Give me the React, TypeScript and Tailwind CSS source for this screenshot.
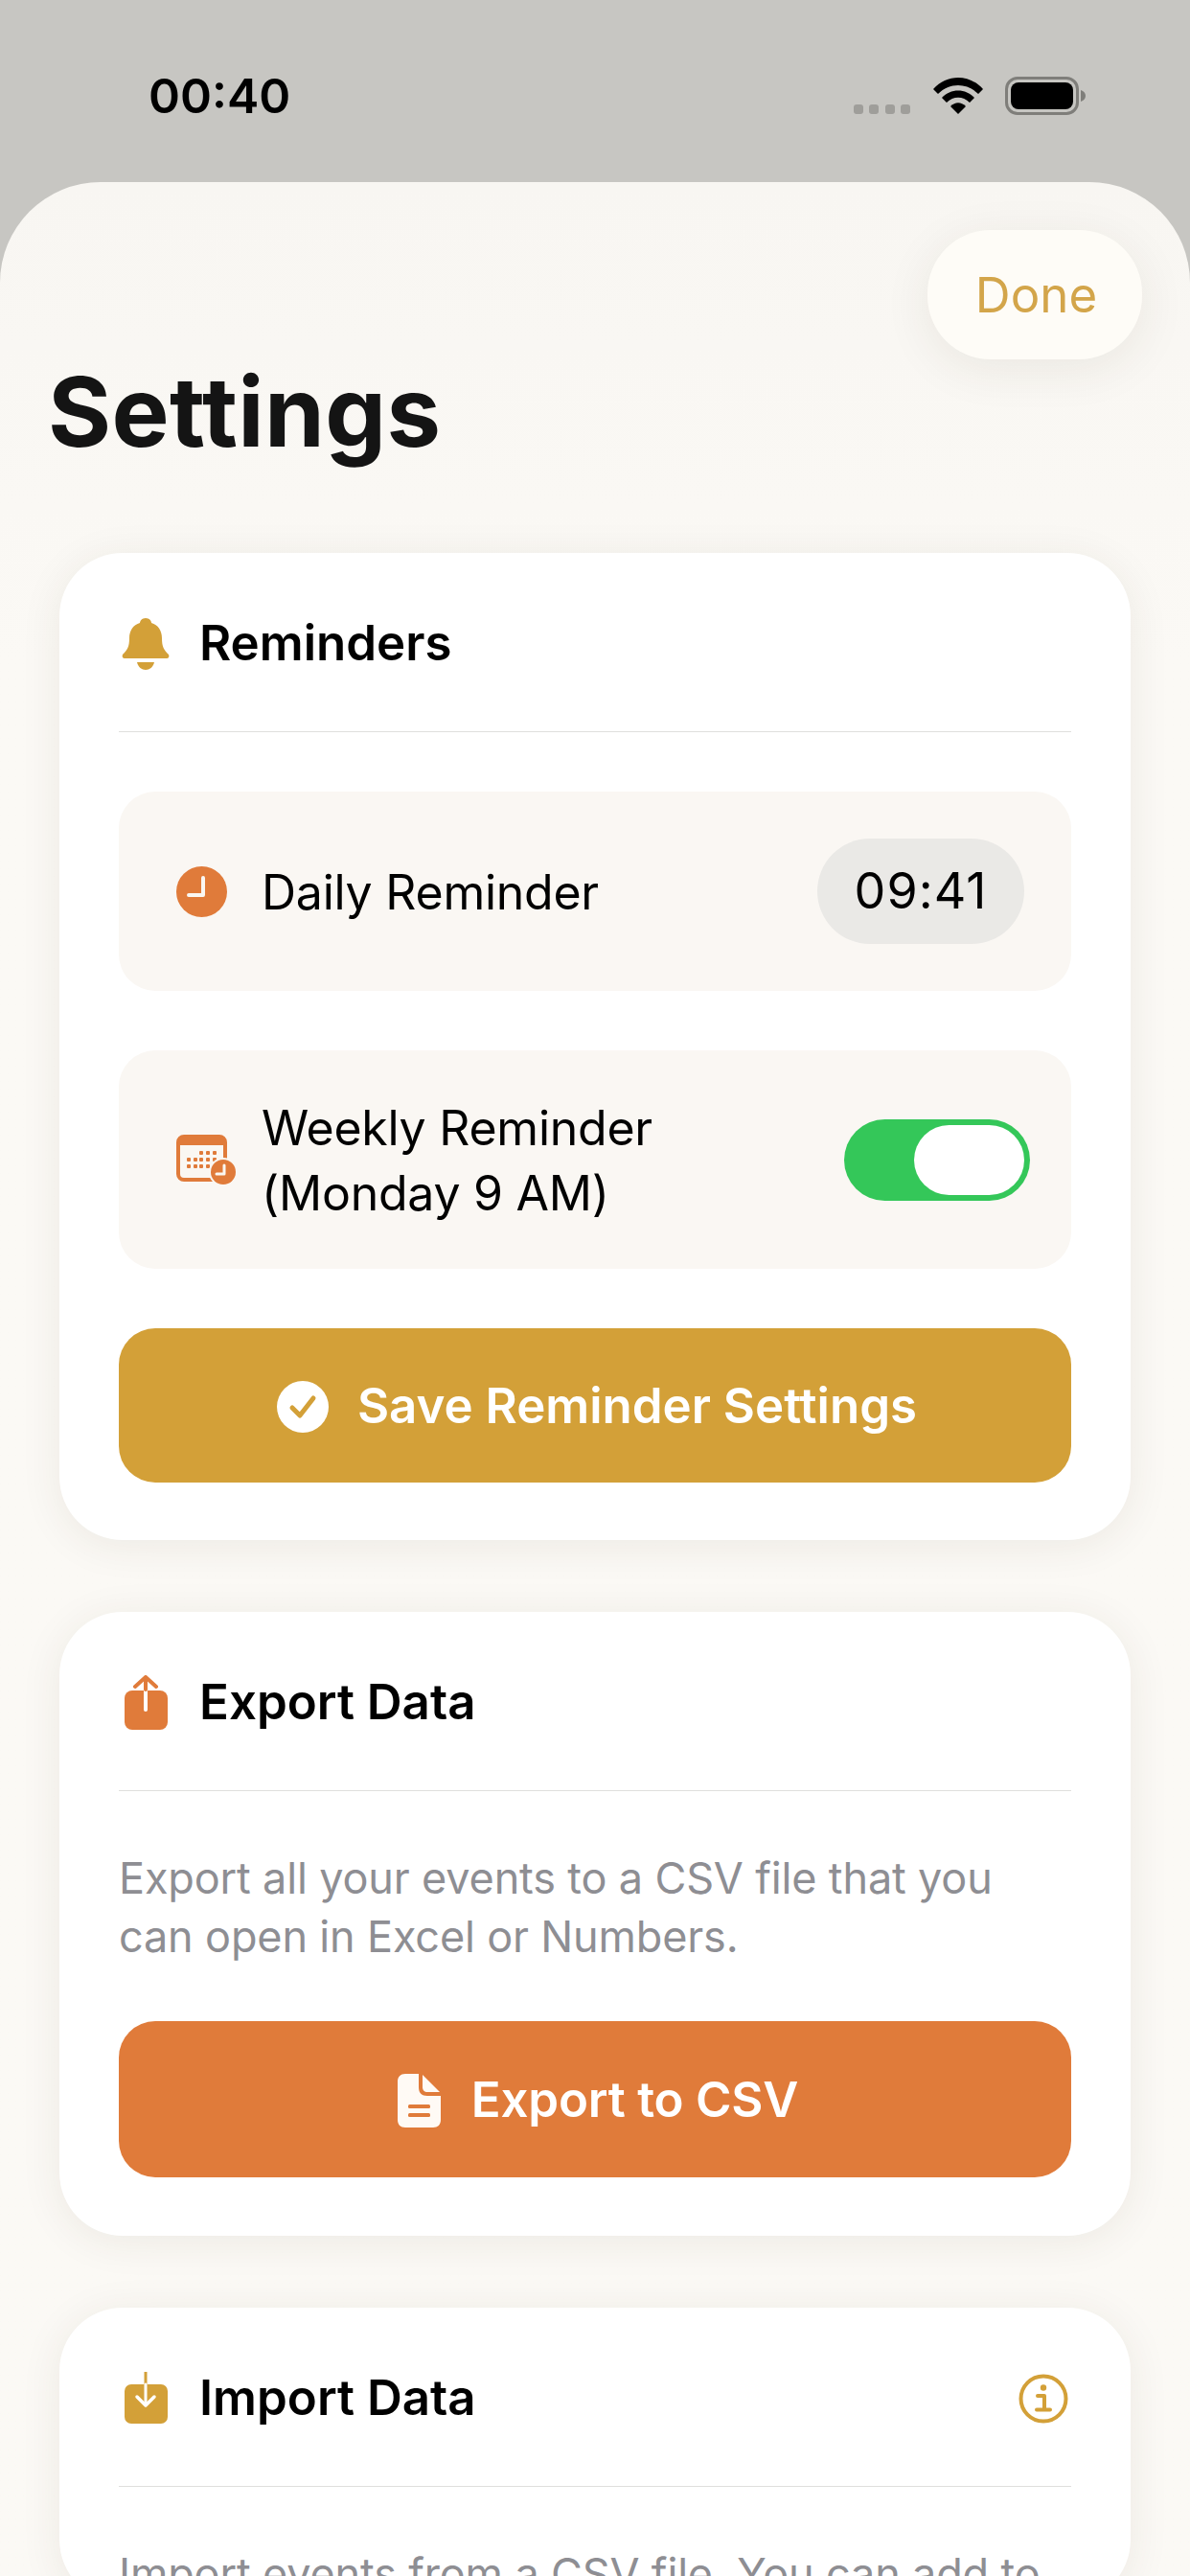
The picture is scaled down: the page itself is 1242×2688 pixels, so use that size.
import React from 'react'

function StatusIcons() {
  return (
    <div className="flex items-center">
      <div className="flex gap-[6.5px] mt-[28px] mr-[23px]">
        <span className="w-[10px] h-[10px] rounded-[3px] bg-[#9f9e9a]" />
        <span className="w-[10px] h-[10px] rounded-[3px] bg-[#9f9e9a]" />
        <span className="w-[10px] h-[10px] rounded-[3px] bg-[#9f9e9a]" />
        <span className="w-[10px] h-[10px] rounded-[3px] bg-[#9f9e9a]" />
      </div>
      <svg width="54" height="40" viewBox="0 0 54 40" className="mr-[22px]">
        <path d="M1 13 C15 -3 39 -3 53 13 L48 18 C36 6 18 6 6 18 Z" fill="#000" />
        <path d="M10 22 C19 12 35 12 44 22 L39 27 C32 20 22 20 15 27 Z" fill="#000" />
        <path d="M19 31 C24 26 30 26 35 31 L27 39 Z" fill="#000" />
      </svg>
      <div className="flex items-center">
        <div className="w-[77px] h-[40px] rounded-[13px] border-[3px] border-[#7f7e7a] p-[3px]">
          <div className="w-full h-full rounded-[8px] bg-black" />
        </div>
        <svg width="5" height="12" viewBox="0 0 5 12" className="ml-[2px]">
          <path d="M0 0 C3 1 5 3 5 6 C5 9 3 11 0 12 Z" fill="#7f7e7a" />
        </svg>
      </div>
    </div>
  )
}

function BellIcon() {
  return (
    <svg width="50" height="54" viewBox="0 0 50 54">
      <path
        d="M25 0 C29 0 31 3 31 5 C38 7 42 13 42 21 C42 30 44 33 49 38 C50 40 49 42 47 42 L3 42 C1 42 0 40 1 38 C6 33 8 30 8 21 C8 13 12 7 19 5 C19 3 21 0 25 0 Z"
        fill="#d3a038"
      />
      <path d="M16 46 L34 46 C33 51 29 54 25 54 C21 54 17 51 16 46 Z" fill="#d3a038" />
    </svg>
  )
}

function ClockIcon() {
  return (
    <svg width="53" height="53" viewBox="0 0 53 53">
      <circle cx="26.5" cy="26.5" r="26.5" fill="#e07b3a" />
      <path d="M28 12 L28 30 L13 30" fill="none" stroke="#faf7f2" strokeWidth="4" strokeLinecap="round" strokeLinejoin="round" />
    </svg>
  )
}

function CalendarClockIcon() {
  const dots = [
    [24, 17], [31, 17], [38, 17],
    [11, 24], [18, 24], [24, 24], [31, 24], [38, 24],
    [11, 31], [18, 31], [24, 31], [31, 31],
  ]
  return (
    <svg width="62" height="52" viewBox="0 0 62 52">
      <rect x="2" y="2" width="49" height="45" rx="6" fill="#faf7f2" stroke="#e07b3a" strokeWidth="4" />
      <path d="M2 8 a6 6 0 0 1 6 -6 h37 a6 6 0 0 1 6 6 v3 h-49 Z" fill="#e07b3a" />
      {dots.map(([x, y]) => (
        <rect key={`${x}-${y}`} x={x} y={y} width="4" height="4" rx="1" fill="#e07b3a" />
      ))}
      <circle cx="49" cy="39" r="15" fill="#faf7f2" />
      <circle cx="49" cy="39" r="13" fill="#e07b3a" />
      <path d="M50 32 L50 41 L42 41" fill="none" stroke="#faf7f2" strokeWidth="3" strokeLinecap="round" strokeLinejoin="round" />
    </svg>
  )
}

function ExportIcon() {
  return (
    <svg width="50" height="58" viewBox="0 0 50 58">
      <rect x="3" y="16" width="45" height="41" rx="8" fill="#e07b3a" />
      <path d="M25 3 L25 36" stroke="#ffffff" strokeWidth="4" strokeLinecap="round" />
      <path d="M25 3 L25 15" stroke="#e07b3a" strokeWidth="4" strokeLinecap="round" />
      <path d="M14 12 L25 2 L36 12" fill="none" stroke="#e07b3a" strokeWidth="4" strokeLinecap="round" strokeLinejoin="round" />
    </svg>
  )
}

function ImportIcon() {
  return (
    <svg width="50" height="55" viewBox="0 0 50 55">
      <rect x="3" y="13" width="45" height="41" rx="7" fill="#d3a038" />
      <path d="M25 0 L25 13" stroke="#d3a038" strokeWidth="3" strokeLinecap="round" />
      <path d="M25 13 L25 34" stroke="#ffffff" strokeWidth="3" strokeLinecap="round" />
      <path d="M16 26 L25 35 L34 26" fill="none" stroke="#ffffff" strokeWidth="3.5" strokeLinecap="round" strokeLinejoin="round" />
    </svg>
  )
}

function InfoIcon() {
  return (
    <svg width="52" height="52" viewBox="0 0 52 52">
      <circle cx="26" cy="26" r="23.5" fill="none" stroke="#d3a038" strokeWidth="4" />
      <circle cx="26" cy="14.5" r="3.2" fill="#d3a038" />
      <path d="M20 23 L27 23 L27 37 M19 37.5 L33 37.5" fill="none" stroke="#d3a038" strokeWidth="4" strokeLinecap="round" strokeLinejoin="round" />
    </svg>
  )
}

function CheckIcon() {
  return (
    <svg width="54" height="54" viewBox="0 0 54 54">
      <circle cx="27" cy="27" r="27" fill="#ffffff" />
      <path d="M16 28 L24 36 L38 18" fill="none" stroke="#d3a038" strokeWidth="5" strokeLinecap="round" strokeLinejoin="round" />
    </svg>
  )
}

function DocIcon() {
  return (
    <svg width="46" height="56" viewBox="0 0 46 56">
      <path
        d="M8 0 L22 0 L22 14 C22 20 25 23 31 23 L45 23 L45 48 C45 53 42 56 37 56 L8 56 C3 56 0 53 0 48 L0 8 C0 3 3 0 8 0 Z"
        fill="#fffaf5"
      />
      <path d="M26 1 L44 19 L31 19 C28 19 26 17 26 14 Z" fill="#fffaf5" />
      <rect x="11" y="32" width="23" height="4" rx="1.5" fill="#e07b3a" />
      <rect x="11" y="41" width="23" height="4" rx="1.5" fill="#e07b3a" />
    </svg>
  )
}

function CardHeader({ icon, title, trailing }: { icon: React.ReactNode; title: string; trailing?: React.ReactNode }) {
  return (
    <div className="h-[187px] pt-[3px] flex items-center justify-between border-b border-[#dfdfdd]">
      <div className="flex items-center">
        <div className="w-[84px] pl-[3px] flex items-center">{icon}</div>
        <span className="text-[51px] font-semibold text-black">{title}</span>
      </div>
      {trailing}
    </div>
  )
}

function Card({ children, className }: { children: React.ReactNode; className?: string }) {
  return (
    <div className={`mx-[62px] px-[62px] bg-white rounded-[66px] shadow-[0_6px_44px_rgba(60,50,30,0.08)] ${className ?? ''}`}>
      {children}
    </div>
  )
}

export default function App() {
  return (
    <div
      className="relative w-[1242px] h-[2688px] overflow-hidden bg-[#c7c6c2]"
      style={{ fontFamily: 'Inter, "Noto Sans", sans-serif' }}
    >
      <div className="h-[190px] pl-[155px] pr-[109px] pt-[66px] flex items-start justify-between">
        <span className="text-[50px] leading-[68px] font-semibold text-black">00:40</span>
        <div className="pt-[14px]">
          <StatusIcons />
        </div>
      </div>

      <div className="h-[2498px] rounded-t-[105px] bg-gradient-to-b from-[#f8f6f2] to-[#fbf9f5] to-[20%] pt-[179px]">
        <h1 className="pl-[50px] text-[101px] leading-[120px] tracking-[0.4px] font-bold text-[#141414]">Settings</h1>

        <div className="mt-[88px] flex flex-col gap-[75px]">
          <Card className="pb-[60px]">
            <CardHeader icon={<BellIcon />} title="Reminders" />
            <div className="pt-[62px] flex flex-col gap-[62px]">
              <div className="h-[208px] pl-[60px] pr-[49px] rounded-[38px] bg-[#faf7f3] flex items-center justify-between">
                <div className="flex items-center">
                  <div className="w-[89px]">
                    <ClockIcon />
                  </div>
                  <span className="pt-[2px] text-[50px] tracking-[-0.25px] text-black">Daily Reminder</span>
                </div>
                <div className="w-[216px] h-[110px] rounded-full bg-[#eae9e6] flex items-center justify-center text-[52px] tracking-[1px] text-black">
                  09:41
                </div>
              </div>

              <div className="h-[228px] pl-[60px] pr-[43px] rounded-[38px] bg-[#faf7f3] flex items-center justify-between">
                <div className="flex items-center">
                  <div className="w-[89px]">
                    <CalendarClockIcon />
                  </div>
                  <span className="pt-[2px] text-[50px] leading-[68px] tracking-[-0.25px] text-black">
                    Weekly Reminder
                    <br />
                    (Monday 9 AM)
                  </span>
                </div>
                <div className="w-[194px] h-[85px] rounded-full bg-[#34c759] p-[6px] flex justify-end">
                  <div className="w-[115px] h-[73px] rounded-full bg-white" />
                </div>
              </div>

              <button
                type="button"
                className="h-[161px] pl-[4px] pt-[2px] rounded-[38px] bg-[#d3a038] flex items-center justify-center gap-[30px] text-[51px] font-semibold text-white"
              >
                <CheckIcon />
                Save Reminder Settings
              </button>
            </div>
          </Card>

          <Card className="pb-[61px]">
            <CardHeader icon={<ExportIcon />} title="Export Data" />
            <p className="pt-[60px] text-[45px] leading-[61px] tracking-[-0.15px] text-[#8e8e93]">
              Export all your events to a CSV file that you can open in Excel or Numbers.
            </p>
            <button
              type="button"
              className="mt-[58px] w-full h-[163px] pl-[6px] pt-[2px] rounded-[38px] bg-[#e07b3a] flex items-center justify-center gap-[31px] text-[51px] tracking-[-0.2px] font-semibold text-white"
            >
              <DocIcon />
              Export to CSV
            </button>
          </Card>

          <Card>
            <CardHeader icon={<ImportIcon />} title="Import Data" trailing={<div className="mr-[3px]"><InfoIcon /></div>} />
            <p className="pt-[60px] text-[45px] leading-[61px] tracking-[-0.15px] text-[#8e8e93]">
              Import events from a CSV file. You can add to
            </p>
          </Card>
        </div>
      </div>

      <button
        type="button"
        className="absolute left-[968px] top-[240px] w-[224px] h-[135px] pl-[3px] pt-[2px] rounded-[66px] bg-[#fefcf7] text-[51px] text-[#d3a54a] shadow-[0_10px_50px_rgba(60,50,30,0.08)]"
      >
        Done
      </button>
    </div>
  )
}
